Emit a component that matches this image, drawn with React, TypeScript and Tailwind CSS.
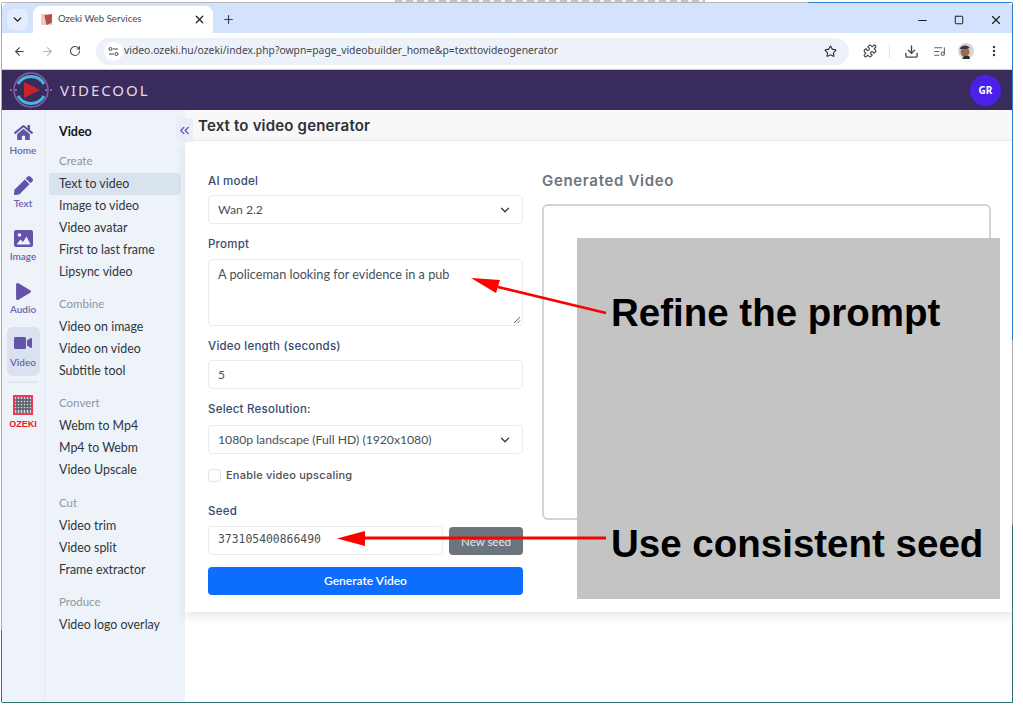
import {
  ArrowLeft,
  ArrowRight,
  ChevronDown,
  ChevronsLeft,
  Download,
  ListMusic,
  Minus,
  MoreVertical,
  Plus,
  Puzzle,
  RotateCw,
  Square,
  Star,
  X,
} from "lucide-react";
import { FaHome, FaPen, FaPlay, FaVideo } from "react-icons/fa";

const groups = [
  { title: "Create", pt: "pt-0", items: ["Text to video", "Image to video", "Video avatar", "First to last frame", "Lipsync video"] },
  { title: "Combine", pt: "pt-[9px]", items: ["Video on image", "Video on video", "Subtitle tool"] },
  { title: "Convert", pt: "pt-[9px]", items: ["Webm to Mp4", "Mp4 to Webm", "Video Upscale"] },
  { title: "Cut", pt: "pt-[10px]", items: ["Video trim", "Video split", "Frame extractor"] },
  { title: "Produce", pt: "pt-[9px]", items: ["Video logo overlay"] },
];

function ImageIcon({ className }: { className?: string }) {
  return (
    <svg viewBox="0 0 19 17" className={className}>
      <rect width="19" height="17" rx="2" fill="#6353ab" />
      <circle cx="5.5" cy="5" r="1.8" fill="#eef3fa" />
      <path d="M2.5 14.5l4-5 2.5 2.5 3.5-5.5 4 8z" fill="#eef3fa" />
    </svg>
  );
}

const rail = [
  { label: "Home", icon: <FaHome className="h-[19px] w-[19px] text-[#6353ab]" /> },
  { label: "Text", icon: <FaPen className="h-[19px] w-[19px] text-[#6353ab]" /> },
  { label: "Image", icon: <ImageIcon className="h-[17px] w-[19px]" /> },
  { label: "Audio", icon: <FaPlay className="h-[17px] w-[17px] text-[#6353ab]" /> },
];

const poppins = "font-['Inter',sans-serif]";

function Logo() {
  return (
    <svg width="50" height="40" viewBox="0 0 50 40" className="flex-none">
      <circle cx="25" cy="20" r="17" fill="none" stroke="#8e5bb5" strokeWidth="1.5" />
      <path d="M12 14a15 15 0 0 1 26 0" fill="none" stroke="#45b7dc" strokeWidth="3" />
      <path d="M12 26a15 15 0 0 0 26 0" fill="none" stroke="#45b7dc" strokeWidth="3" />
      <path d="M18 12l16 8-16 8z" fill="#c8232c" />
      <circle cx="5" cy="20" r="1" fill="#a77bd0" />
      <circle cx="10" cy="20" r="1" fill="#a77bd0" />
      <circle cx="40" cy="20" r="1" fill="#a77bd0" />
      <circle cx="45" cy="20" r="1" fill="#a77bd0" />
    </svg>
  );
}

function OzekiLogo() {
  return (
    <svg width="20" height="20" viewBox="0 0 20 20">
      <rect width="20" height="20" fill="#ef3b50" />
      <rect x="2" y="2" width="16" height="16" fill="#d7dbe2" />
      <path d="M4 2v16M7 2v16M10 2v16M13 2v16M16 2v16M2 5h16M2 8h16M2 11h16M2 14h16" stroke="#555b66" strokeWidth="1.4" />
    </svg>
  );
}

function Label({ children }: { children: string }) {
  return <div className={`${poppins} h-[15px] text-[11.5px] leading-[15px] font-medium tracking-[0.02em] text-[#34496e]`}>{children}</div>;
}

function Field({ children, mono, cls = "w-full" }: { children: string; mono?: boolean; cls?: string }) {
  return (
    <div className={`h-[29px] ${cls} flex items-center rounded-[4px] border border-[#e9ecef] px-[9px] text-[#495057] ${mono ? "font-['DejaVu_Sans_Mono',monospace] text-[11.4px]" : "text-[12px]"}`}>
      {children}
    </div>
  );
}

function SelectBox({ children }: { children: string }) {
  return (
    <div className="flex h-[29px] w-full items-center justify-between rounded-[4px] border border-[#e9ecef] pr-[10px] pl-[9px] text-[12.2px] text-[#495057]">
      <span className="pt-[1px]">{children}</span>
      <ChevronDown className="h-[14px] w-[14px] text-[#343a40]" strokeWidth={2.2} />
    </div>
  );
}

export default function App() {
  return (
    <div className="relative h-[710px] w-[1023px] overflow-hidden bg-white pt-[3px] pl-[2px] font-['Lato',sans-serif]">
      <div className="flex h-[700px] w-[1011px] flex-col overflow-hidden rounded-t-[6px] border-b border-[#2f7470] bg-white">
        {/* Tab strip */}
        <div className="flex h-[30px] flex-none items-end bg-[#d3e3fd] pl-[5px]">
          <div className="mb-[3px] grid h-[21px] w-[21px] place-items-center rounded-[6px] bg-[#e3edfd]">
            <ChevronDown className="h-[13px] w-[13px] text-[#1f1f1f]" strokeWidth={2.6} />
          </div>
          <div className="ml-[5px] flex h-[27px] w-[180px] items-center rounded-t-[8px] bg-white px-[7px]">
            <svg width="13" height="13" viewBox="0 0 12 12" className="flex-none">
              <rect x="1" y="1" width="10" height="10" fill="#f4c7c3" />
              <path d="M4 2l7-1v8l-5 2z" fill="#b3504a" />
            </svg>
            <span className="ml-[5px] flex-1 text-[9.6px] text-[#45474a]">Ozeki Web Services</span>
            <X className="h-[13px] w-[13px] text-[#1f1f1f]" strokeWidth={2.4} />
          </div>
          <Plus className="mb-[7px] ml-[9px] h-[13px] w-[13px] text-[#3c3f43]" strokeWidth={2.2} />
          <div className="flex-1" />
          <div className="mb-[6px] flex items-center gap-[25px] pr-[10px] text-[#1f1f1f]">
            <Minus className="h-[13px] w-[13px]" strokeWidth={2} />
            <Square className="h-[10px] w-[10px]" strokeWidth={2.4} />
            <X className="h-[14px] w-[14px]" strokeWidth={2} />
          </div>
        </div>

        {/* Toolbar */}
        <div className="flex h-[37px] flex-none items-center border-b border-[#c9ccd1] bg-white pl-[11px] text-[#474747]">
          <ArrowLeft className="h-[13px] w-[13px]" strokeWidth={2} />
          <ArrowRight className="ml-[15px] h-[13px] w-[13px] text-[#b4b6b9]" strokeWidth={2} />
          <RotateCw className="ml-[15px] h-[12px] w-[12px]" strokeWidth={2.2} />
          <div className="ml-[15px] flex h-[27px] w-[753px] items-center rounded-full bg-[#edf2fa] pr-[12px] pl-[8px]">
            <div className="grid h-[19px] w-[19px] place-items-center rounded-full bg-white">
              <svg width="11" height="11" viewBox="0 0 11 11" fill="none" stroke="#474747" strokeWidth="1">
                <circle cx="2.5" cy="3" r="1.5" />
                <path d="M5 3h5M1 8h5" />
                <circle cx="8.5" cy="8" r="1.5" />
              </svg>
            </div>
            <span className="ml-[1px] flex-1 font-['Noto_Sans',sans-serif] text-[10.35px] text-[#45474a]">
              video.ozeki.hu/ozeki/index.php?owpn=page_videobuilder_home&amp;p=texttovideogenerator
            </span>
            <Star className="h-[13px] w-[13px] text-[#2b2b2b]" strokeWidth={2} />
          </div>
          <Puzzle className="ml-[14px] h-[14px] w-[14px]" strokeWidth={2} />
          <div className="ml-[12px] h-[13px] w-px bg-[#d3e3fd]" />
          <Download className="ml-[14px] h-[15px] w-[15px]" strokeWidth={2.2} />
          <ListMusic className="ml-[14px] h-[13px] w-[13px] text-[#5f6368]" strokeWidth={2} />
          <svg width="16" height="16" viewBox="0 0 16 16" className="ml-[12px]">
            <circle cx="8" cy="8" r="8" fill="#d9d5d0" />
            <circle cx="7" cy="9" r="4.5" fill="#9a6a4f" />
            <path d="M1.5 6C3 2 9 1 12 5L8 6z" fill="#35393d" />
            <path d="M4 16l2-3h5l1 3z" fill="#2a2a2a" />
          </svg>
          <MoreVertical className="ml-[13px] h-[14px] w-[14px] text-[#3c3c3c]" strokeWidth={2.2} />
        </div>

        {/* App header */}
        <div className="flex h-[40px] flex-none items-center justify-between bg-[#392c5c] pr-[12px] pl-[4px]">
          <div className="flex items-center gap-[4px]">
            <Logo />
            <span className="font-['Noto_Sans',sans-serif] text-[15px] tracking-[0.13em] text-[#e8d6e8]">VIDECOOL</span>
          </div>
          <div className="grid h-[31px] w-[31px] place-items-center rounded-full bg-[#4b20e8] font-['Noto_Sans',sans-serif] text-[10px] font-bold text-white">
            GR
          </div>
        </div>

        <div className="flex min-h-0 flex-1">
          {/* Icon rail */}
          <div className="flex w-[43px] flex-none flex-col items-center border-r border-[#e3e8f0] bg-[#eef3fa] pt-[10px]">
            {rail.map((r) => (
              <div key={r.label} className="flex h-[53px] w-full flex-none flex-col items-center">
                <div className="grid h-[24px] place-items-center">{r.icon}</div>
                <span className="text-[10px] font-semibold leading-[12px] text-[#6d62ab]">{r.label}</span>
              </div>
            ))}
            <div className="-mt-[5px] flex h-[49px] w-[33px] flex-none flex-col items-center rounded-[6px] bg-[#dae2ef] pt-[4px]">
              <div className="grid h-[24px] place-items-center">
                <FaVideo className="h-[18px] w-[18px] text-[#6353ab]" />
              </div>
              <span className="mt-[1px] text-[10px] font-semibold leading-[12px] text-[#6d62ab]">Video</span>
            </div>
            <div className="mt-[5px] h-[2px] w-[30px] bg-[#e0e5ee]" />
            <div className="mt-[12px]">
              <OzekiLogo />
            </div>
            <span className="mt-[3px] font-['Liberation_Sans',sans-serif] text-[9px] leading-[12px] font-bold text-[#f0141e]">OZEKI</span>
          </div>

          {/* Menu */}
          <div className="w-[140px] flex-none bg-[#eef3fa] pt-[14px]">
            <div className="pl-[14px] text-[12.5px] leading-[16px] font-bold text-[#111]">Video</div>
            <div className="mt-[9px] pr-[4px] pl-[4px]">
              {groups.map((g) => (
                <div key={g.title} className={g.pt}>
                  <div className="flex h-[24px] items-center pl-[10px] text-[11.5px] text-[#8c95a3]">{g.title}</div>
                  {g.items.map((item) => (
                    <div
                      key={item}
                      className={`flex h-[22px] items-center rounded-[4px] pt-[1px] pl-[10px] text-[12.4px] text-[#30353b] ${item === "Text to video" ? "bg-[#d9e3ee]" : ""}`}
                    >
                      {item}
                    </div>
                  ))}
                </div>
              ))}
            </div>
          </div>

          {/* Main */}
          <div className="flex min-w-0 flex-1 flex-col">
            <div className={`${poppins} flex h-[31px] flex-none items-center border-b border-[#eeeeee] bg-[#f8f8f8] pt-[2px] pl-[13px] text-[15px] font-semibold tracking-[0.012em] text-[#2c3038]`}>
              Text to video generator
            </div>
            <div className="flex h-[471px] flex-none gap-[19px] bg-white pt-[33px] pl-[23px] shadow-[0_4px_10px_rgba(0,0,0,0.1)]">
              <div className="w-[315px] flex-none">
                <Label>AI model</Label>
                <div className="mt-[6px]">
                  <SelectBox>Wan 2.2</SelectBox>
                </div>
                <div className="mt-[13px]">
                  <Label>Prompt</Label>
                </div>
                <div className="relative mt-[7px] h-[67px] rounded-[4px] border border-[#e9ecef] px-[9px] pt-[5px] text-[12.7px] text-[#495057]">
                  A policeman looking for evidence in a pub
                  <svg width="8" height="8" viewBox="0 0 8 8" className="absolute right-[1px] bottom-[1px]" stroke="#666" strokeWidth="1">
                    <path d="M1 7l6-6M4.5 7l2.5-2.5" />
                  </svg>
                </div>
                <div className="mt-[13px]">
                  <Label>Video length (seconds)</Label>
                </div>
                <div className="mt-[6px]">
                  <Field>5</Field>
                </div>
                <div className="mt-[13px]">
                  <Label>Select Resolution:</Label>
                </div>
                <div className="mt-[8px]">
                  <SelectBox>1080p landscape (Full HD) (1920x1080)</SelectBox>
                </div>
                <div className="mt-[13px] flex items-center gap-[5px]">
                  <div className="h-[13px] w-[13px] rounded-[3px] border border-[#e1e4e8]" />
                  <span className={`${poppins} text-[11px] font-medium tracking-[0.02em] text-[#495057]`}>Enable video upscaling</span>
                </div>
                <div className="mt-[20px]">
                  <Label>Seed</Label>
                </div>
                <div className="mt-[7px] flex items-start gap-[6px]">
                  <Field mono cls="w-[235px] flex-none">373105400866490</Field>
                  <div className="mt-[1px] flex h-[28px] flex-1 items-end justify-center rounded-[4px] bg-[#6c757d] pb-[6px] text-[11.5px] leading-[14px] text-[#e5e7ea]">
                    New seed
                  </div>
                </div>
                <div className="mt-[12px] grid h-[28px] place-items-center rounded-[4px] bg-[#0d6efd] text-[12px] font-semibold text-white">
                  Generate Video
                </div>
              </div>
              <div className="w-[449px] flex-none">
                <div className={`${poppins} h-[14px] text-[15px] leading-[14px] font-semibold tracking-[0.045em] text-[#6c757d]`}>Generated Video</div>
                <div className="mt-[16px] h-[316px] rounded-[6px] border-2 border-[#ced4da]" />
              </div>
            </div>
          </div>
        </div>
      </div>

      {/* Window edges from the desktop behind the capture */}
      <div className="absolute top-0 left-[395px] h-[2px] w-[310px] bg-[repeating-linear-gradient(to_right,#c4c4c4_0px,#c4c4c4_7px,#f2f2f2_7px,#f2f2f2_11px)]" />
      <div className="absolute top-[2px] left-[2px] h-px w-[1010px] bg-[linear-gradient(to_right,#b5b5b5_806px,#2b7fc8_806px)]" />
      <div className="absolute top-[3px] left-[1012px] h-[699px] w-px bg-[linear-gradient(to_bottom,#2b7fc8_337px,#a9a9a9_337px,#a9a9a9_522px,#2f7470_522px)]" />
      <div className="absolute top-[3px] left-px h-[699px] w-px bg-[linear-gradient(to_bottom,#aaaaaa_627px,#2f7470_627px)]" />

      {/* Collapse button sits over the menu edge */}
      <div className="absolute top-[118px] left-[176px] grid h-[24px] w-[17px] place-items-center rounded-l-[5px] bg-[#e8eef8]">
        <ChevronsLeft className="h-[15px] w-[15px] text-[#6353ab]" strokeWidth={2.2} />
      </div>

      {/* Annotations */}
      <div className="absolute top-[238px] left-[577px] flex h-[361px] w-[423px] flex-col bg-[#c4c4c4] pl-[34px] font-['Liberation_Sans',sans-serif] text-[38.5px] leading-[42px] font-bold text-black">
        <div className="mt-[54px]">Refine the prompt</div>
        <div className="mt-[189px]">Use consistent seed</div>
      </div>
      <svg width="180" height="300" viewBox="0 0 180 300" className="absolute top-[260px] left-[330px] overflow-visible">
        <path d="M276 53L168 27" stroke="#ff0000" strokeWidth="2.5" fill="none" />
        <path d="M141 18l29 2-4 13z" fill="#ff0000" />
        <path d="M276 278H35" stroke="#ff0000" strokeWidth="3" fill="none" />
        <path d="M7 278.5l28-7.5v15z" fill="#ff0000" />
      </svg>
    </div>
  );
}
